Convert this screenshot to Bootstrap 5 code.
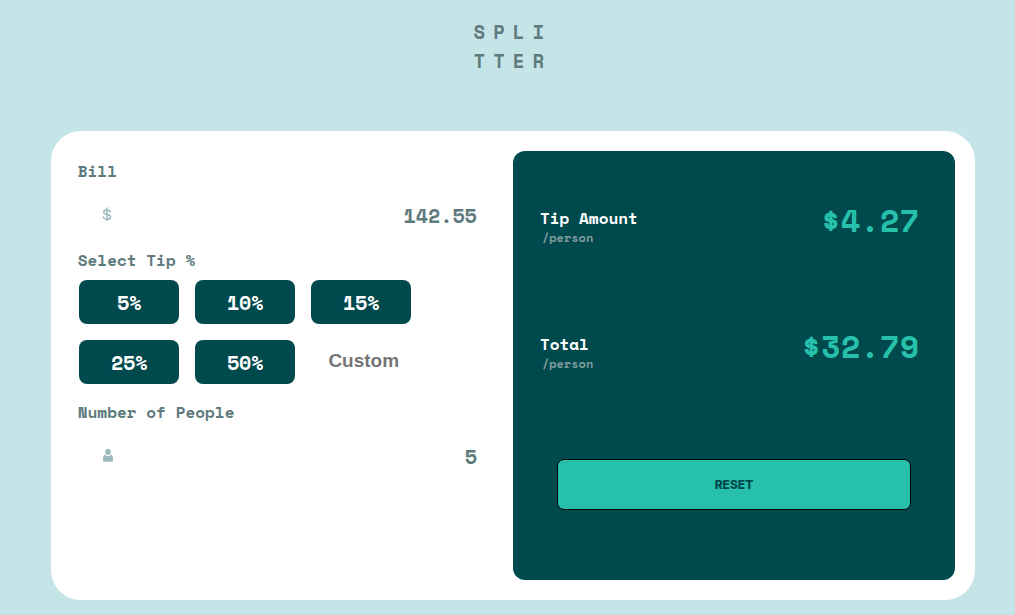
<!DOCTYPE html>
<html lang="en">
<head>
<meta charset="utf-8">
<meta name="viewport" content="width=device-width, initial-scale=1">
<title>Splitter</title>
<link href="https://cdn.jsdelivr.net/npm/bootstrap@5.3.0/dist/css/bootstrap.min.css" rel="stylesheet">
<style>
:root { --deep: #00494d; --mint: #26c0ab; --slate: #5e7a7d; --mist: #7f9c9f; }
body { background: #c5e4e7; color: var(--slate); font-family: "Space Mono", "Liberation Mono", monospace; font-weight: 700; font-size: 16px; line-height: 24px; }
.page { margin: 0 40px 0 5%; }
.logo { font-size: 19px; line-height: 29px; letter-spacing: 8px; font-weight: 700; margin: 18px 0 55px; }
.calculator { border-radius: 30px; padding: 20px; }
.entry { padding: 8px 32px 0 7px; }
.entry label, .entry legend { font-size: 16px; line-height: 24px; margin: 0; }
.field { height: 44px; margin: 9px 0 12px; }
.field input { border: 0; background: transparent; height: 44px; padding: 2px 4px 0 50px; font-size: 20px; font-weight: 700; color: var(--slate); text-align: right; }
.field-icon { position: absolute; left: 24px; top: 14px; color: #9dbbbd; pointer-events: none; }
.tips { display: grid; grid-template-columns: repeat(3, 100px); gap: 16px; padding: 8px 1px 0; margin-bottom: 16px; }
.tip-btn { height: 44px; padding: 2px 0 0 1px; border: 0; border-radius: 8px; background: var(--deep); color: #fff; font-size: 20px; font-weight: 700; }
.tip-btn:hover { background: var(--mint); color: var(--deep); }
.tip-custom { height: 44px; border: 0; padding: 0 0 2px 6px; background: transparent; font-family: "Liberation Sans", Arial, sans-serif; font-size: 19px; font-weight: 700; text-align: center; color: var(--slate); }
.tip-custom::placeholder { color: #757575; opacity: 1; }
.results { background: var(--deep); border-radius: 12px; padding: 47px 36px 70px 27px; }
.result { height: 126px; }
.result h2 { font-size: 16px; line-height: 24px; font-weight: 700; color: #fff; margin: 8px 0 0; }
.result p { font-size: 12px; line-height: 16px; color: var(--mist); margin: 0 0 0 2px; }
.result output { font-size: 32px; line-height: 44px; color: var(--mint); }
.reset-btn { height: 51px; margin: 9px 8px 0 17px; border: 1px solid #000; border-radius: 7px; background: var(--mint); color: var(--deep); font-family: Inter, "Open Sans", sans-serif; font-size: 12px; font-weight: 800; }
</style>
</head>
<body>
<div class="page">
  <header class="text-center overflow-hidden">
    <h1 class="logo">SPLI<br>TTER</h1>
  </header>
  <main class="calculator bg-white">
    <div class="row g-0">
      <form class="entry col-6">
        <label for="bill">Bill</label>
        <div class="field position-relative">
          <svg class="field-icon" width="12" height="16" viewBox="1 0 12 16" fill="none" stroke="currentColor" stroke-width="1.500" aria-hidden="true">
            <path d="M6 1.500v13.500M9.300 6.500C9.300 4.900 8 4 6 4S2.700 4.800 2.700 6.300C2.700 9.200 9.600 7.600 9.600 10.700 9.600 12.200 8.200 13.200 6 13.200S2.300 12.200 2.300 10.500"/>
          </svg>
          <input class="w-100" id="bill" type="text" inputmode="decimal" value="142.55">
        </div>
        <fieldset>
          <legend>Select Tip %</legend>
          <div class="tips">
            <button class="tip-btn" type="button">5%</button>
            <button class="tip-btn" type="button">10%</button>
            <button class="tip-btn" type="button">15%</button>
            <button class="tip-btn" type="button">25%</button>
            <button class="tip-btn" type="button">50%</button>
            <input class="tip-custom w-100" type="text" inputmode="decimal" placeholder="Custom" aria-label="Custom tip">
          </div>
        </fieldset>
        <label for="people">Number of People</label>
        <div class="field position-relative">
          <svg class="field-icon" width="12" height="16" viewBox="0 3 12 16" fill="currentColor" aria-hidden="true">
            <path d="M6 4.800c1.700 0 2.900 1.300 2.900 3S7.700 11 6 11 3.100 9.500 3.100 7.800 4.300 4.800 6 4.800z"/>
            <path d="M3 10.400c.8 1 1.800 1.500 3 1.500s2.200-.5 3-1.500c1.500.8 2.100 2.300 2.100 5.200 0 1.600-.8 2.200-2 2.200H2.900c-1.200 0-2-.6-2-2.200 0-2.900.6-4.400 2.100-5.200z"/>
          </svg>
          <input class="w-100" id="people" type="text" inputmode="numeric" value="5">
        </div>
      </form>
      <section class="results col-6 d-flex flex-column">
        <div class="result d-flex justify-content-between align-items-start">
          <div><h2>Tip Amount</h2><p>/person</p></div>
          <output for="bill people">$4.27</output>
        </div>
        <div class="result d-flex justify-content-between align-items-start">
          <div><h2>Total</h2><p>/person</p></div>
          <output for="bill people">$32.79</output>
        </div>
        <button class="reset-btn" type="button">RESET</button>
      </section>
    </div>
  </main>
</div>
<script src="https://cdn.jsdelivr.net/npm/bootstrap@5.3.0/dist/js/bootstrap.bundle.min.js"></script>
</body>
</html>
